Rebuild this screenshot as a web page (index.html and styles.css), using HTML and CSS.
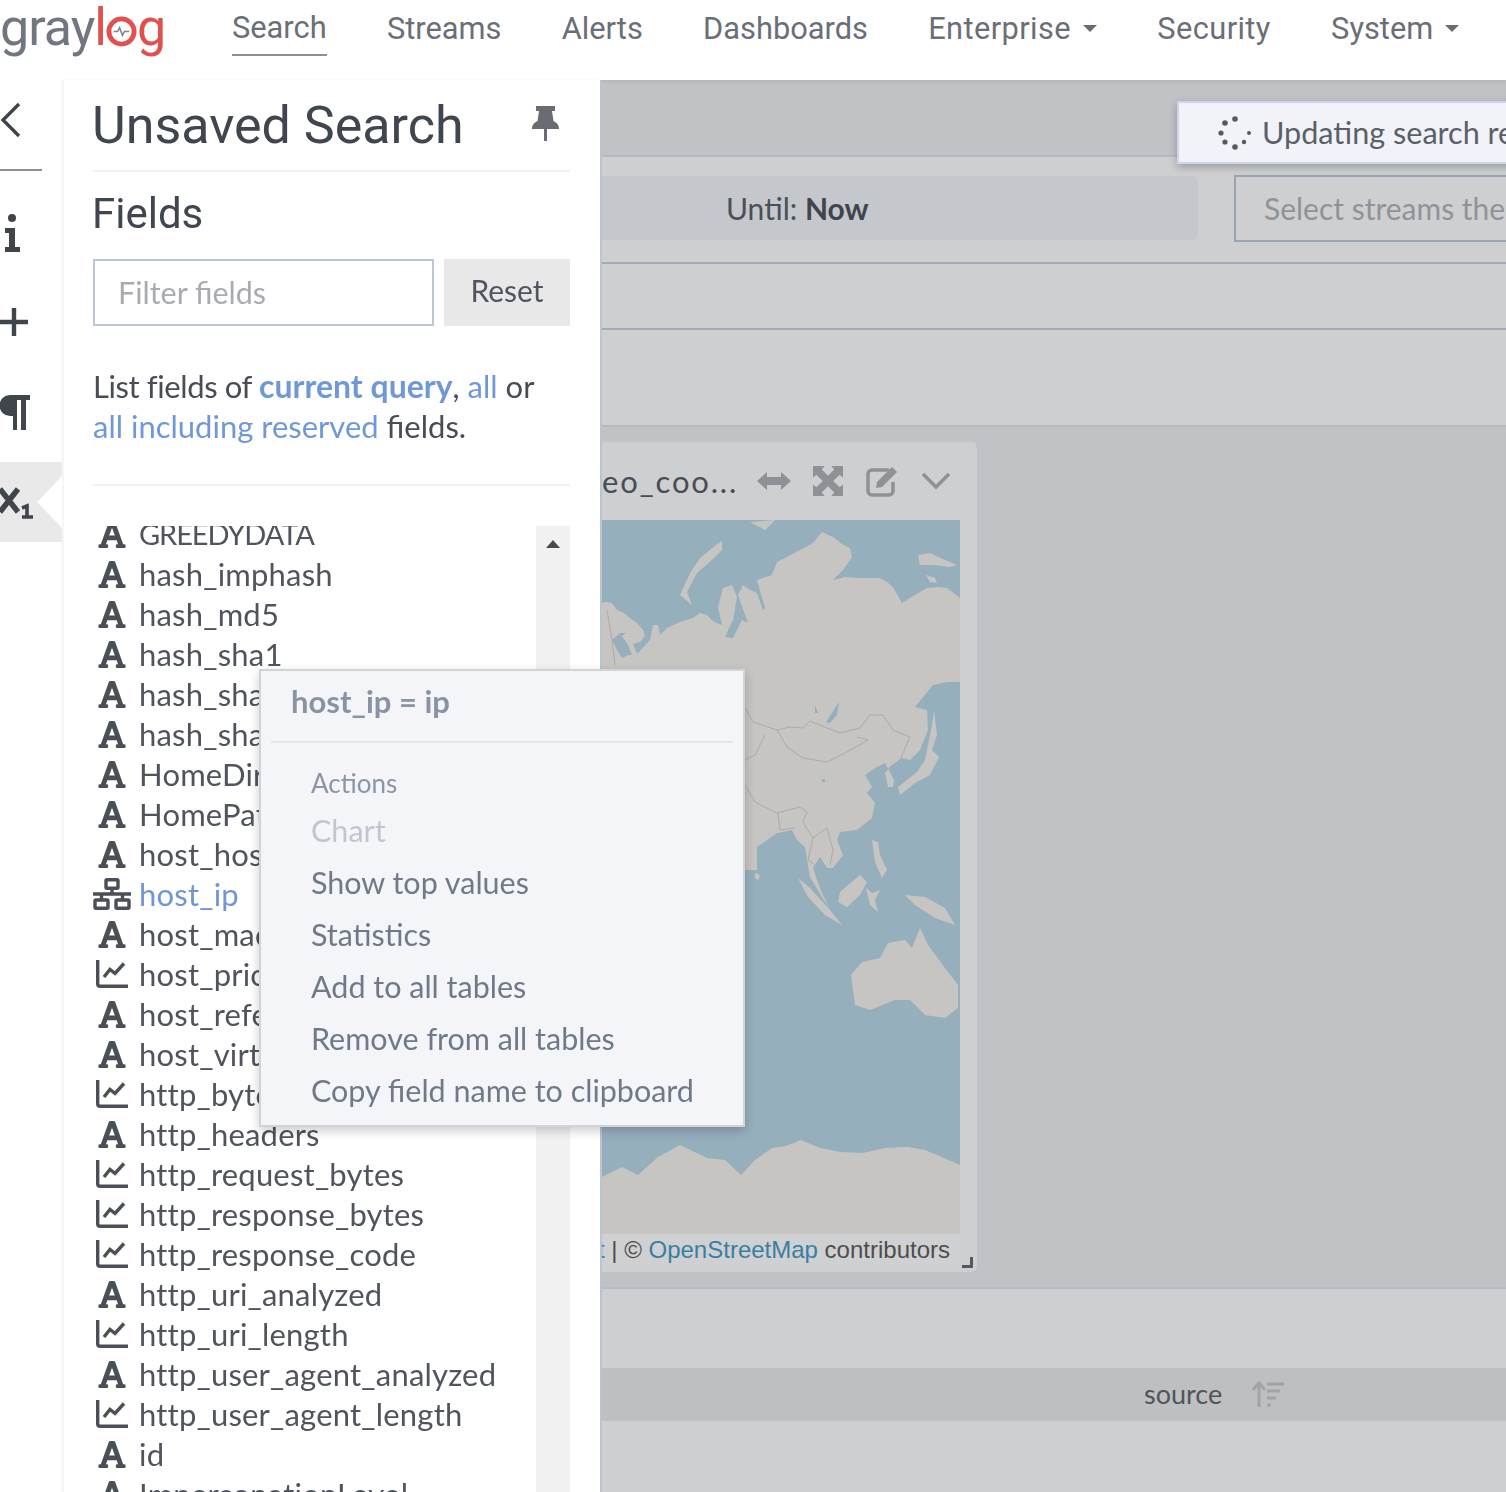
FILE: index.html
```html
<!DOCTYPE html>
<html lang="en">
<head>
<meta charset="utf-8">
<title>Graylog - Search</title>
<link rel="stylesheet" href="styles.css">
</head>
<body>
<svg class="defs" aria-hidden="true">
  <symbol id="i-font" viewBox="0 0 448 512"><path d="M432 416h-23.41L277.88 53.69A32 32 0 0 0 247.58 32h-47.16a32 32 0 0 0-30.3 21.69L39.41 416H16a16 16 0 0 0-16 16v32a16 16 0 0 0 16 16h128a16 16 0 0 0 16-16v-32a16 16 0 0 0-16-16h-19.6l23.3-64h152.6l23.3 64H304a16 16 0 0 0-16 16v32a16 16 0 0 0 16 16h128a16 16 0 0 0 16-16v-32a16 16 0 0 0-16-16zM176.85 272L224 142.51 271.15 272z"/></symbol>
  <symbol id="i-chart" viewBox="0 0 32 28"><path d="M1.7 0V24a2.500 2.500 0 0 0 2.500 2.300H32" fill="none" stroke="currentColor" stroke-width="3.400"/><path d="M8 17L14 9.500L19 13.500L28 3.500" fill="none" stroke="currentColor" stroke-width="3.400"/></symbol>
</svg>
<div class="app">
  <header class="topbar">
    <div class="logo"><span class="logo-gray">gray</span><span class="logo-red">l</span><svg class="logo-o" viewBox="0 0 32 32"><circle cx="16" cy="16" r="13" fill="none" stroke="#e0504d" stroke-width="5"/><path d="M8 16h4l2-4 3 8 2-4h5" fill="none" stroke="#7b8490" stroke-width="1.600"/></svg><span class="logo-red">g</span></div>
    <nav class="nav">
      <a class="nav-item active">Search</a>
      <a class="nav-item">Streams</a>
      <a class="nav-item">Alerts</a>
      <a class="nav-item">Dashboards</a>
      <a class="nav-item nav-wide">Enterprise<i class="caret"></i></a>
      <a class="nav-item nav-wide">Security</a>
      <a class="nav-item">System<i class="caret"></i></a>
    </nav>
  </header>
  <main class="main">
    <aside class="rail">
      <div class="rail-item rail-back"><svg width="22" height="36" viewBox="0 0 22 36"><path d="M19 2L3 18L19 34" fill="none" stroke="#3f444d" stroke-width="3.400"/></svg></div>
      <div class="rail-item rail-info"><svg width="20" height="40" viewBox="0 0 20 40"><circle cx="10" cy="5" r="4" fill="#3f444d"/><path d="M3 15H13V34H18V39H3V34H7V20H3Z" fill="#3f444d"/></svg></div>
      <div class="rail-item rail-plus"><svg width="30" height="34" viewBox="0 0 30 34"><path d="M0 17H28M14 3V31" fill="none" stroke="#3f444d" stroke-width="4.400"/></svg></div>
      <div class="rail-item rail-para"><svg width="31" height="36" viewBox="0 0 31 36"><path d="M10 1H30V6H26V36H21V6H17V36H13V22H10A10.500 10.500 0 0 1 10 1Z" fill="#3f444d"/></svg></div>
      <div class="rail-item rail-active"><svg width="34" height="36" viewBox="0 0 34 36"><path d="M0 5L18 28M18 5L0 28" fill="none" stroke="#3f444d" stroke-width="5.500"/><path d="M22 24L27 22V33M22 33H33" fill="none" stroke="#3f444d" stroke-width="3.600"/></svg></div>
    </aside>
    <section class="panel">
      <div class="panel-head">
        <h1 class="panel-title">Unsaved Search</h1>
        <svg class="pin" width="28" height="36" viewBox="0 0 28 36"><path d="M5 0H24V5H21L22.500 15C26 17 28 19 28 23H16V35H13V23H1C1 19 3 17 6.500 15L8 5H5Z" fill="#696c72"/></svg>
      </div>
      <h2 class="panel-sub">Fields</h2>
      <div class="filter">
        <div class="filter-input">Filter fields</div>
        <div class="filter-reset">Reset</div>
      </div>
      <p class="hint"><span class="hint-lead">List fields of </span><a class="link strong">current query</a>, <a class="link">all</a> or<br><a class="link">all including reserved</a> fields.</p>
      <div class="field-area">
        <ul class="fields">
          <li class="field field-caps"><svg class="ico ico-a"><use href="#i-font"/></svg>GREEDYDATA</li>
          <li class="field"><svg class="ico ico-a"><use href="#i-font"/></svg>hash_imphash</li>
          <li class="field"><svg class="ico ico-a"><use href="#i-font"/></svg>hash_md5</li>
          <li class="field"><svg class="ico ico-a"><use href="#i-font"/></svg>hash_sha1</li>
          <li class="field"><svg class="ico ico-a"><use href="#i-font"/></svg>hash_sha256</li>
          <li class="field"><svg class="ico ico-a"><use href="#i-font"/></svg>hash_sha512</li>
          <li class="field"><svg class="ico ico-a"><use href="#i-font"/></svg>HomeDirectory</li>
          <li class="field"><svg class="ico ico-a"><use href="#i-font"/></svg>HomePath</li>
          <li class="field"><svg class="ico ico-a"><use href="#i-font"/></svg>host_hostname</li>
          <li class="field field-active"><svg class="ico ico-net" viewBox="0 0 38 32"><g fill="none" stroke="#4a4f58" stroke-width="3.400"><rect x="13" y="1.700" width="12" height="8.500" rx="1"/><rect x="2" y="22" width="13" height="8.300" rx="1"/><rect x="23" y="22" width="13" height="8.300" rx="1"/><path d="M19 10V16M0 16H38M8.500 16V22M29.500 16V22"/></g></svg>host_ip</li>
          <li class="field"><svg class="ico ico-a"><use href="#i-font"/></svg>host_mac</li>
          <li class="field"><svg class="ico ico-c"><use href="#i-chart"/></svg>host_priority</li>
          <li class="field"><svg class="ico ico-a"><use href="#i-font"/></svg>host_referer</li>
          <li class="field"><svg class="ico ico-a"><use href="#i-font"/></svg>host_virtual</li>
          <li class="field"><svg class="ico ico-c"><use href="#i-chart"/></svg>http_bytes</li>
          <li class="field"><svg class="ico ico-a"><use href="#i-font"/></svg>http_headers</li>
          <li class="field"><svg class="ico ico-c"><use href="#i-chart"/></svg>http_request_bytes</li>
          <li class="field"><svg class="ico ico-c"><use href="#i-chart"/></svg>http_response_bytes</li>
          <li class="field"><svg class="ico ico-c"><use href="#i-chart"/></svg>http_response_code</li>
          <li class="field"><svg class="ico ico-a"><use href="#i-font"/></svg>http_uri_analyzed</li>
          <li class="field"><svg class="ico ico-c"><use href="#i-chart"/></svg>http_uri_length</li>
          <li class="field"><svg class="ico ico-a"><use href="#i-font"/></svg>http_user_agent_analyzed</li>
          <li class="field"><svg class="ico ico-c"><use href="#i-chart"/></svg>http_user_agent_length</li>
          <li class="field"><svg class="ico ico-a"><use href="#i-font"/></svg>id</li>
          <li class="field"><svg class="ico ico-a"><use href="#i-font"/></svg>ImpersonationLevel</li>
        </ul>
        <div class="scrollbar"><i class="scroll-up"></i></div>
      </div>
    </section>
    <section class="content">
      <div class="row row-top"></div>
      <div class="row row-time">
        <div class="timebox">Until:&nbsp;<b>Now</b></div>
        <div class="streams">Select streams the search should include. Searches in all streams if empty.</div>
      </div>
      <div class="row row-query"></div>
      <div class="row row-empty"></div>
      <div class="row row-widgets">
        <article class="widget">
          <div class="widget-head">
            <span class="widget-title">eo_coo...</span>
            <svg class="w-ico" width="34" height="20" viewBox="0 0 34 20"><path d="M0 10L10 1V6H24V1L34 10L24 19V14H10V19Z" fill="#8e9195"/></svg>
            <svg class="w-ico w-exp" width="30" height="30" viewBox="0 0 31 31"><path d="M0 0H12L9 3.500 15.500 10 22 3.500 19 0H31V12L27.500 9 21 15.500 27.500 22 31 19V31H19L22 27.500 15.500 21 9 27.500 12 31H0V19L3.500 22 10 15.500 3.500 9 0 12Z" fill="#8e9195"/></svg>
            <svg class="w-ico w-edit" width="34" height="34" viewBox="0 0 34 34"><path d="M24 6H7A4 4 0 0 0 3 10V27A4 4 0 0 0 7 31H24A4 4 0 0 0 28 27V18" fill="none" stroke="#8e9195" stroke-width="3.500"/><path d="M12 18L27 3L32 8L17 23L11 24Z" fill="#8e9195"/></svg>
            <svg class="w-ico w-chev" width="30" height="20" viewBox="0 0 30 20"><path d="M2 3L15 16L28 3" fill="none" stroke="#8e9195" stroke-width="3.400"/></svg>
          </div>
          <div class="map">
            <svg class="map-svg" viewBox="602 520 358 714" preserveAspectRatio="none">
              <rect x="600" y="520" width="360" height="714" fill="#96afbd"/>
              <g fill="#c6c5c2">
                <path d="M600 603L606 602 612 603 617 610 624 613 630 618 637 623 643 630 645 636 640 642 633 644 637 654 632 655 628 645 622 636 626 633 620 633 612 640 617 650 622 658 628 655 637 654 650 640 653 625 658 625 660 635 667 628 680 622 693 618 700 613 707 615 714 622 722 625 718 607 723 588 732 585 737 597 733 620 725 637 733 638 742 620 748 623 738 595 743 585 750 590 757 593 763 610 765 608 757 580 772 575 777 562 787 557 800 550 813 543 822 532 833 537 842 544 850 548 852 557 843 570 833 580 845 577 857 578 870 578 880 578 887 582 893 587 902 603 915 595 927 588 937 587 947 588 960 598V682L947 682 933 685 915 707 927 710 928 730 920 750 910 760 902 758 890 767 885 773 888 787 893 787 894 780 885 763 875 768 865 775 872 787 867 793 875 803 872 818 857 830 840 832 837 840 843 855 833 868 827 868 820 857 813 868 817 880 822 893 830 910 810 877 805 847 797 840 792 830 777 833 767 840 757 847 757 870 745 870V1100H600Z"/>
                <path d="M722 541L716 545 700 558 690 573 680 595 692 605 687 592 697 573 712 560 722 550Z"/>
                <path d="M600 1178L622 1167 638 1175 658 1157 680 1145 707 1158 725 1160 741 1175 755 1160 772 1148 786 1146 801 1140 820 1148 841 1152 863 1153 885 1148 908 1147 925 1150 944 1158 960 1165V1234H600Z"/>
                <path d="M851 975L862 962 880 958 888 943 905 940 912 948 920 928 928 945 945 968 958 985 958 1008 945 1018 925 1015 910 1000 895 1000 870 1010 855 1005Z"/>
                <path d="M798 878L810 888 830 910 842 925 825 915 808 897Z"/>
                <path d="M840 892L860 875 867 882 860 895 847 907 838 902Z"/>
                <path d="M872 840L878 842 880 855 887 870 882 878 875 862Z"/>
                <path d="M866 888L872 893 880 890 875 900 878 912 870 905Z"/>
                <path d="M905 895L925 897 945 908 955 925 935 918 915 905Z"/>
                <path d="M934 710L937 735 932 750 939 757 930 775 915 783 900 795 898 787 917 772 925 760 928 745 932 725Z"/>
                <path d="M918 555L930 553 945 560 957 565 950 567 935 565 920 565Z"/>
                <path d="M926 575L935 578 937 583 930 582Z"/>
                <path d="M750 522L775 520 765 530Z"/>
                <path d="M755 873L760 875 758 880 755 878Z"/>
              </g>
              <g fill="#96afbd">
                <path d="M826 722L839 702 837 715 830 723Z"/>
                <path d="M815 705l3 8-3 0z"/>
                <path d="M822 779h3v3h-3z"/>
              </g>
              <g class="map-borders">
                <path d="M745 708L753 722 777 730 790 727 803 728 810 721 827 728 840 733 860 728 870 715 883 715 893 730 910 737"/>
                <path d="M777 730L787 747 803 758 827 762 847 752 868 740 857 737"/>
                <path d="M745 785L755 802 777 813 800 807 807 812 803 822 813 838 827 828 833 850 830 865"/>
                <path d="M607 610L612 640 615 665"/>
                <path d="M745 760L755 755 765 735"/>
                <path d="M778 813L780 830 795 828"/>
                <path d="M813 838L808 860 815 865"/>
                <path d="M910 737L900 760 890 767"/>
              </g>
            </svg>
            <div class="attrib"><span class="attrib-inner"><a>Leaflet</a> | © <a>OpenStreetMap</a> contributors</span></div>
          </div>
          <i class="resize"></i>
        </article>
      </div>
      <div class="row row-table">
        <div class="table-head"><span>source</span><svg class="sort" width="32" height="26" viewBox="0 0 32 26"><path d="M7 26V5M1 9L7 2 13 9" fill="none" stroke="#a1a3a6" stroke-width="3"/><path d="M15 3H32M15 10H28M15 17H24M15 24H19" stroke="#a1a3a6" stroke-width="3"/></svg></div>
      </div>
      <div class="toast">
        <svg class="spinner" width="34" height="34" viewBox="0 0 34 34"><g fill="#555a61"><circle cx="17" cy="3" r="2.800"/><circle cx="7" cy="7" r="2.800"/><circle cx="3" cy="17" r="2.600"/><circle cx="7" cy="26" r="2.600"/><circle cx="17" cy="31" r="2.800"/><circle cx="26" cy="26" r="2.200"/><circle cx="31" cy="17" r="2"/></g></svg>
        <span>Updating search results...</span>
      </div>
    </section>
    <div class="popover">
      <div class="pop-title">host_ip = ip</div>
      <div class="pop-body">
        <div class="pop-label">Actions</div>
        <div class="pop-item disabled">Chart</div>
        <div class="pop-item">Show top values</div>
        <div class="pop-item">Statistics</div>
        <div class="pop-item">Add to all tables</div>
        <div class="pop-item">Remove from all tables</div>
        <div class="pop-item">Copy field name to clipboard</div>
      </div>
    </div>
  </main>
</div>
</body>
</html>
```

FILE: styles.css
```css
* { box-sizing: border-box; }
html, body { margin: 0; padding: 0; background: #fff; }
body { width: 1506px; height: 1492px; overflow: hidden; font-family: "Lato", "Noto Sans", sans-serif; color: #4d525b; }
.defs { display: none; }
.app { width: 1506px; height: 1492px; overflow: hidden; display: flex; flex-direction: column; filter: blur(.45px); }

.topbar { height: 80px; flex: none; display: flex; align-items: flex-start; background: #fff; }
.logo { width: 232px; height: 80px; flex: none; display: flex; align-items: baseline; font-family: "Roboto", sans-serif; font-size: 52px; line-height: 56px; letter-spacing: -1px; white-space: nowrap; }
.logo-gray { color: #707781; }
.logo-red { color: #e0504d; }
.logo-o { width: 31px; height: 31px; align-self: flex-start; margin-top: 16px; flex: none; }
.nav { display: flex; gap: 60.300px; height: 56px; font-family: "Roboto", sans-serif; font-size: 30.800px; color: #6a6f77; }
.nav-item { display: flex; align-items: center; height: 56px; white-space: nowrap; }
.nav-item.active { border-bottom: 2px solid #8a8f96; }
.nav-wide { letter-spacing: .4px; }
.caret { display: inline-block; width: 0; height: 0; margin-left: 12px; border-left: 7.500px solid transparent; border-right: 7.500px solid transparent; border-top: 7px solid #686d75; }

.main { flex: 1; min-height: 0; display: flex; position: relative; }
.rail { width: 64px; flex: none; display: flex; flex-direction: column; align-items: flex-start; background: #fff; }
.rail-item { display: flex; align-items: center; width: 100%; }
.rail-back { height: 91px; width: 42px; border-bottom: 2px solid #8d9096; padding-bottom: 10px; justify-content: flex-start; }
.rail-info { height: 106px; padding: 18px 0 0 2px; }
.rail-plus { height: 90px; }
.rail-para { height: 90px; }
.rail-active { height: 80px; margin-top: 5px; background: #e9e9e9; position: relative; width: 62px; }
.rail-active::after { content: ""; position: absolute; right: 0; top: 14px; border-top: 26px solid transparent; border-bottom: 26px solid transparent; border-right: 25px solid #fff; }

.panel { width: 536px; flex: none; padding: 0 30px 0 29px; background: #fff; box-shadow: -2px 0 3px #f2f2f2; display: flex; flex-direction: column; overflow: hidden; }
.panel-head { height: 92px; flex: none; display: flex; justify-content: space-between; align-items: center; border-bottom: 2px solid #f0f0f3; padding-right: 11px; }
.panel-title { margin: 2px 0 0 -1px; font-family: "Roboto", sans-serif; font-weight: 400; font-size: 52px; line-height: 88px; color: #3f4650; white-space: nowrap; }
.pin { margin-top: -2px; }
.panel-sub { margin: 0 0 0 -1px; height: 87px; font-family: "Roboto", sans-serif; font-weight: 400; font-size: 42px; line-height: 84px; color: #3f4650; flex: none; }
.filter { display: flex; gap: 10px; height: 67px; flex: none; }
.filter-input { width: 341px; border: 2px solid #bcc6d6; padding-left: 23px; font-size: 30.500px; line-height: 63px; color: #a8abb0; }
.filter-reset { flex: 1; background: #e8e8e8; text-align: center; font-size: 30px; line-height: 63px; color: #4f5460; }
.hint { margin: 40px 0 0; font-size: 31px; line-height: 40px; color: #474c55; height: 120px; border-bottom: 2px solid #f0f0f3; flex: none; white-space: nowrap; }
.hint-lead { letter-spacing: -.4px; }
.link { color: #7098d8; }
.strong { font-weight: 700; font-size: 32px; }

.field-area { flex: 1; min-height: 0; display: flex; margin-top: 40px; overflow: hidden; }
.fields { flex: 1; margin: -12px 0 0; padding: 0; list-style: none; }
.field { height: 40px; display: flex; align-items: center; gap: 8px; font-size: 31px; letter-spacing: .2px; line-height: 40px; color: #4f545d; white-space: nowrap; }
.field-caps { font-size: 29px; letter-spacing: -1.100px; }
.field-active { color: #6f96d6; }
.ico { flex: none; width: 38px; color: #4a4f58; fill: currentColor; }
.ico-a { height: 31px; padding: 0 5px; }
.ico-c { height: 28px; padding: 0 3px; }
.ico-net { height: 32px; }
.scrollbar { width: 34px; flex: none; background: #f1f1f1; display: flex; justify-content: center; padding-top: 14px; }
.scroll-up { width: 0; height: 0; border-left: 7.500px solid transparent; border-right: 7.500px solid transparent; border-bottom: 8px solid #4a4a4a; }

.content { flex: 1; min-width: 0; position: relative; display: flex; flex-direction: column; overflow: hidden; background: #c1c2c6; border-left: 2px solid #b9c3d4; box-shadow: inset 0 5px 5px -4px #b0b1b5; }
.row { flex: none; }
.row-top { height: 77px; border-bottom: 2px solid #b6b9c0; }
.row-time { height: 107px; background: #cdcfd1; display: flex; padding-top: 18px; border-bottom: 2px solid #a4aab6; }
.timebox { width: 596px; flex: none; height: 64px; margin-top: 1px; background: #c4c7cb; border-radius: 0 6px 6px 0; padding-left: 124px; font-size: 30px; line-height: 64px; color: #4b5058; white-space: nowrap; }
.timebox b { color: #3f444d; }
.streams { margin-left: 36px; width: 500px; height: 67px; flex: none; border: 2px solid #9aa3b2; padding-left: 28px; font-size: 30px; line-height: 62px; color: #8f9399; white-space: nowrap; overflow: hidden; }
.row-query { height: 66px; background: #cdcfd1; border-bottom: 2px solid #a4aab6; }
.row-empty { height: 97px; background: #cdcfd1; border-bottom: 2px solid #b6b9c0; }
.row-widgets { height: 862px; padding-top: 14px; border-bottom: 2px solid #b6bcc8; }
.widget { position: relative; width: 377px; height: 833px; background: #cdcfd1; border-right: 2px solid #bec2c9; border-bottom: 2px solid #bec2c9; border-top: 2px solid #c7cad0; border-radius: 0 8px 8px 0; padding-right: 17px; display: flex; flex-direction: column; }
.widget-head { height: 77px; flex: none; display: flex; align-items: center; font-size: 31px; color: #474c55; padding-bottom: 2px; }
.widget-title { width: 155px; flex: none; white-space: nowrap; letter-spacing: 1.800px; }
.w-ico { flex: none; }
.w-exp { margin-left: 22px; }
.w-edit { margin-left: 22px; }
.w-chev { margin-left: 22px; }
.map { flex: none; height: 746px; width: 358px; position: relative; background: #cdcfd1; }
.map-svg { display: block; width: 358px; height: 714px; }
.map-borders { fill: none; stroke: #ada0a8; stroke-width: 1; opacity: .8; }
.attrib { height: 32px; display: flex; justify-content: flex-end; overflow: hidden; background: #cfd0d2; }
.attrib-inner { flex: none; padding-right: 10px; font-family: "Liberation Sans", sans-serif; font-size: 24px; line-height: 32px; color: #4d4d4d; white-space: nowrap; }
.attrib-inner a { color: #3a7ea3; }
.resize { position: absolute; right: 4px; bottom: 4px; width: 11px; height: 11px; border-right: 3px solid #55585e; border-bottom: 3px solid #55585e; }

.row-table { flex: 1; background: #cdcfd1; padding-top: 79px; }
.table-head { height: 53px; background: #bebfc1; display: flex; align-items: center; gap: 30px; padding: 0 0 2px 542px; font-size: 27px; color: #50545b; }

.toast { position: absolute; top: 21px; left: 575px; width: 500px; height: 63px; background: #f1f3f9; border: 2px solid #cbd6ec; box-shadow: 0 3px 8px rgba(0,0,0,.25); display: flex; align-items: center; gap: 10px; padding-left: 39px; font-size: 30.600px; color: #5b6068; white-space: nowrap; }

.popover { position: absolute; left: 259px; top: 589px; width: 486px; height: 458px; background: #f4f5f8; border: 2px solid #d2d3d5; box-shadow: 0 4px 10px rgba(0,0,0,.2); padding: 0 10px; }
.pop-title { height: 72px; border-bottom: 2px solid #e6e7ea; padding-left: 20px; font-size: 31px; font-weight: 700; line-height: 60px; color: #8993a4; }
.pop-body { padding: 20px 0 0 40px; }
.pop-label { height: 41px; font-size: 26px; line-height: 40px; color: #8c95a5; }
.pop-item { height: 52px; font-size: 30.500px; line-height: 52px; color: #707989; white-space: nowrap; }
.pop-item.disabled { color: #c0c6d0; }
```
